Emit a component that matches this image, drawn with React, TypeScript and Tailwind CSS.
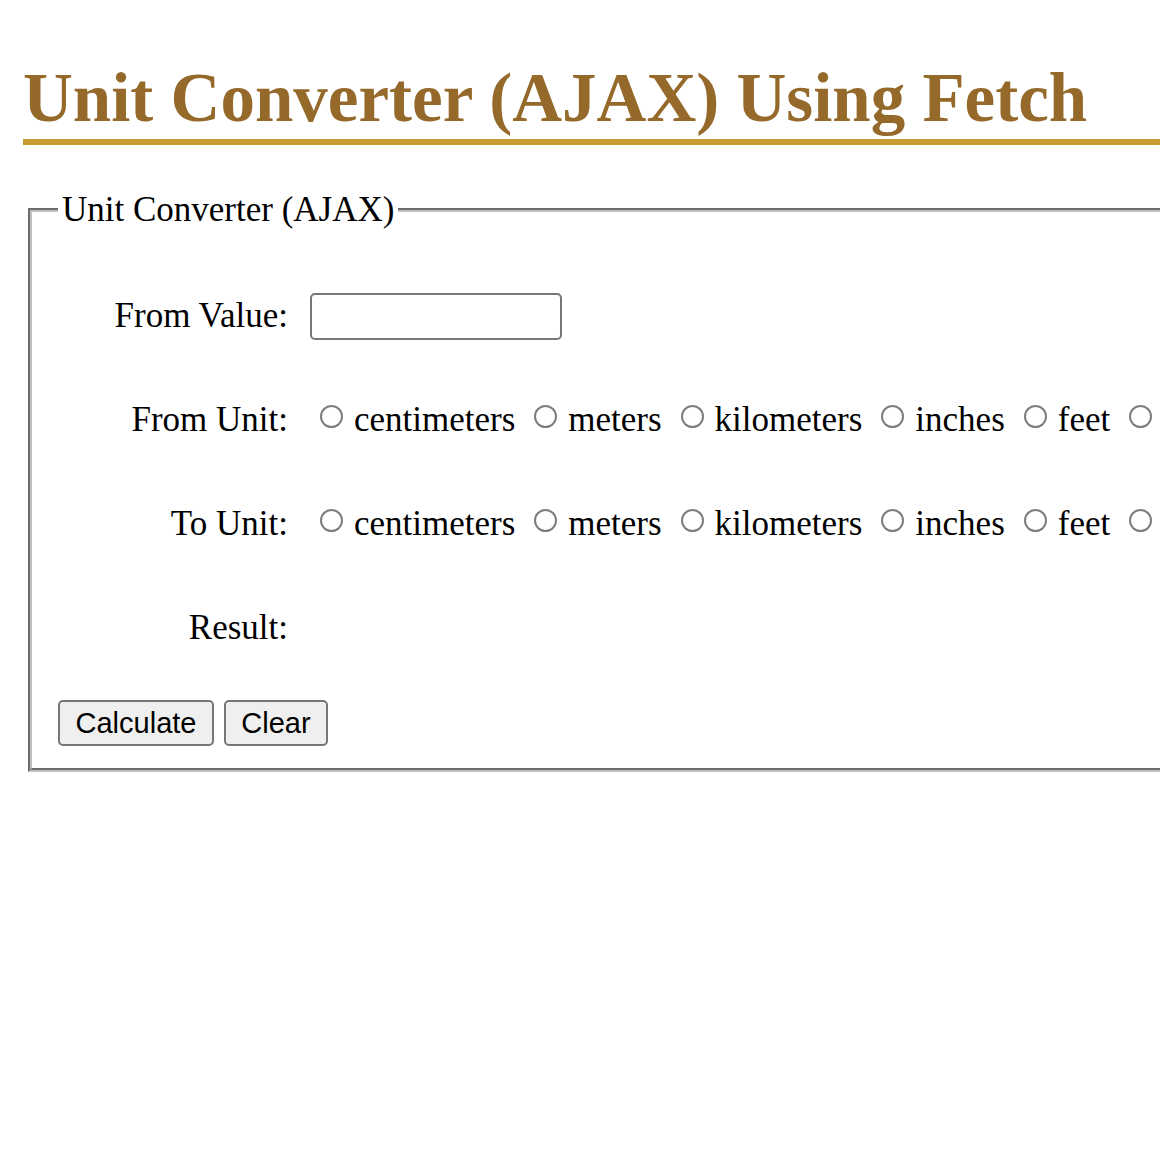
import React, { useState } from 'react';

const UNITS = ['centimeters', 'meters', 'kilometers', 'inches', 'feet', 'miles'];

const serif = "font-['Liberation_Serif','Times_New_Roman',serif]";

interface UnitRowProps {
  label: string;
  name: string;
  value: string;
  onChange: (v: string) => void;
}

const UnitRow: React.FC<UnitRowProps> = ({ label, name, value, onChange }) => (
  <div className="flex h-[104px] items-center">
    <label className="w-[230px] shrink-0 text-right">{label}</label>
    <div className="ml-[22px] flex items-center gap-[19px] pl-[10px] whitespace-nowrap">
      {UNITS.map(u => (
        <label key={u} className="flex items-center cursor-pointer">
          <input
            type="radio"
            name={name}
            checked={value === u}
            onChange={() => onChange(u)}
            className="mb-[7px] h-[23px] w-[23px] shrink-0 appearance-none rounded-full border-2 border-[#7d7d7d] bg-white checked:border-[7px] checked:border-[#1a73e8]"
          />
          <span className="ml-[11px]">{u}</span>
        </label>
      ))}
    </div>
  </div>
);

export default function App() {
  const [fromValue, setFromValue] = useState('');
  const [fromUnit, setFromUnit] = useState('');
  const [toUnit, setToUnit] = useState('');
  const [result, setResult] = useState('');

  const clear = () => {
    setFromValue('');
    setFromUnit('');
    setToUnit('');
    setResult('');
  };

  return (
    <div className="w-[1160px] h-[1160px] overflow-hidden bg-white text-black">
      <div className="w-[1500px]">
        <h1 className={`${serif} ml-[23px] mt-[60px] border-b-[6px] border-[#c89a32] pb-[3px] text-[69px] font-bold leading-[76px] text-[#94692a]`}>
          Unit Converter (AJAX) Using Fetch
        </h1>

        <fieldset className={`${serif} ml-[28px] mt-[45px] border-4 border-[#c0c0c0] [border-style:groove] px-[26px] pb-[22px] text-[35px] leading-[40px]`}>
          <legend className="px-[4px]">Unit Converter (AJAX)</legend>

          <div className="pt-[34px]">
            <div className="flex h-[104px] items-center">
              <label className="w-[230px] shrink-0 text-right">From Value:</label>
              <input
                type="text"
                value={fromValue}
                onChange={e => setFromValue(e.target.value)}
                className="ml-[22px] h-[47px] w-[252px] rounded-[5px] border-2 border-[#777] bg-white px-2 outline-none"
              />
            </div>
            <UnitRow label="From Unit:" name="from_unit" value={fromUnit} onChange={setFromUnit} />
            <UnitRow label="To Unit:" name="to_unit" value={toUnit} onChange={setToUnit} />
            <div className="flex h-[104px] items-center">
              <label className="w-[230px] shrink-0 text-right">Result:</label>
              <span className="ml-[22px]">{result}</span>
            </div>
          </div>

          <div className="mt-[20px] flex gap-[10px] font-['Liberation_Sans',Arial,sans-serif] text-[29px] leading-none">
            <button
              type="button"
              onClick={() => setResult(fromValue)}
              className="h-[46px] w-[156px] rounded-[5px] border-2 border-[#767676] bg-[#efefef]"
            >
              Calculate
            </button>
            <button
              type="button"
              onClick={clear}
              className="h-[46px] w-[104px] rounded-[5px] border-2 border-[#767676] bg-[#efefef]"
            >
              Clear
            </button>
          </div>
        </fieldset>
      </div>
    </div>
  );
}
